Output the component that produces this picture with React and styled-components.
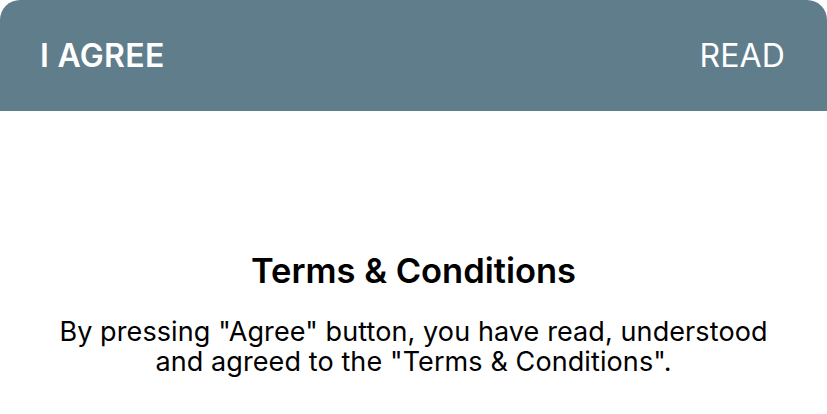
import React from 'react';
import styled, { createGlobalStyle } from 'styled-components';

const GlobalStyle = createGlobalStyle`
  html, body {
    margin: 0;
    padding: 0;
    background: #fff;
  }
  body {
    font-family: Inter, "Noto Sans", "Liberation Sans", sans-serif;
  }
`;

const Sheet = styled.div`
  width: 827px;
  height: 414px;
  display: flex;
  flex-direction: column;
  background: #fff;
`;

const Header = styled.header`
  height: 111px;
  display: flex;
  align-items: center;
  justify-content: space-between;
  padding: 0 42px 0 40px;
  background: #607d8b;
  border-radius: 20px 20px 0 0;
  box-sizing: border-box;
`;

const HeaderButton = styled.button`
  border: 0;
  padding: 0;
  background: none;
  color: #fff;
  font-family: inherit;
  font-size: 32px;
  font-weight: ${({ $bold }) => ($bold ? 600 : 400)};
  letter-spacing: ${({ $bold }) => ($bold ? '0.3px' : '0.1px')};
  cursor: pointer;
`;

const Body = styled.section`
  flex: 1;
  display: flex;
  flex-direction: column;
  align-items: center;
  padding-top: 140px;
  text-align: center;
`;

const Title = styled.h2`
  margin: 0;
  font-size: 34.5px;
  font-weight: 600;
  line-height: 40px;
  color: #000;
`;

const Message = styled.p`
  margin: 26px 0 0;
  font-size: 27px;
  line-height: 30px;
  letter-spacing: 0.1px;
  color: #000;
`;

const App = () => (
  <>
    <GlobalStyle />
    <Sheet>
      <Header>
        <HeaderButton $bold>I AGREE</HeaderButton>
        <HeaderButton>READ</HeaderButton>
      </Header>
      <Body>
        <Title>Terms &amp; Conditions</Title>
        <Message>
          By pressing "Agree" button, you have read, understood
          <br />
          and agreed to the "Terms &amp; Conditions".
        </Message>
      </Body>
    </Sheet>
  </>
);

export default App;
